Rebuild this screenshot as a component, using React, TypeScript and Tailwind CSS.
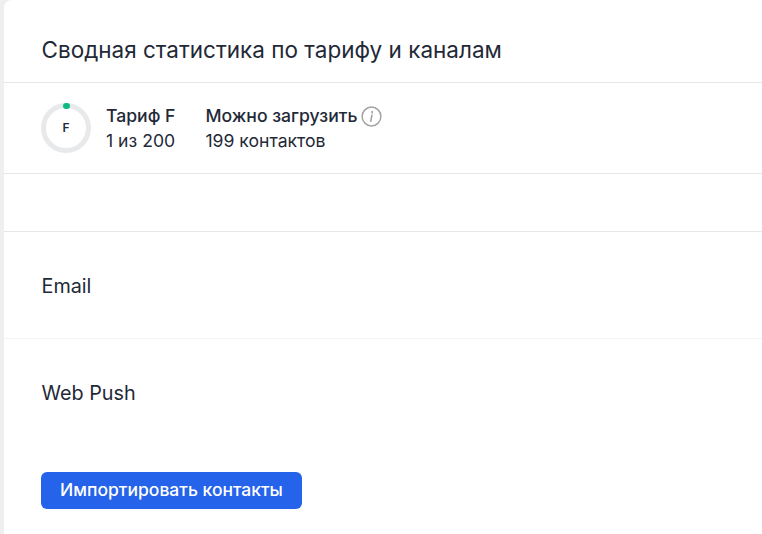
const App = () => {
  return (
    <div className="h-[534px] w-[762px] overflow-hidden bg-[#efefef] pl-[4px] font-['Inter',sans-serif] text-[#1f2937]">
      <div className="h-full rounded-tl-[8px] bg-white">
        {/* Header */}
        <div className="h-[83px] border-b border-[#e5e7eb] pt-[35px] pl-[37.5px]">
          <h1 className="text-[22.5px] leading-[30px] font-normal">Сводная статистика по тарифу и каналам</h1>
        </div>

        {/* Tariff */}
        <div className="flex h-[91px] items-center border-b border-[#e5e7eb] pl-[37px]">
          <div className="relative mr-[15px] flex h-[50px] w-[50px] items-center justify-center rounded-full border-[5px] border-[#e8e9eb] text-[12px] font-semibold">
            F
            <span className="absolute top-[-5px] left-[17px] h-[6px] w-[7px] rounded-full bg-[#10b981]"></span>
          </div>
          <div className="mr-[30px] text-[17.6px] leading-[25px]">
            <div className="font-medium">Тариф F</div>
            <div>1 из 200</div>
          </div>
          <div className="text-[17.6px] leading-[25px]">
            <div className="flex items-center gap-[4px] font-medium">
              Можно загрузить
              <svg className="mt-[2px]" width="21" height="21" viewBox="0 0 21 21" fill="none">
                <circle cx="10.5" cy="10.5" r="9.4" stroke="#a3a3a3" strokeWidth="1.5" />
                <path d="M11.2 5.6v1.5M10.9 9.2l-1.1 6" stroke="#a3a3a3" strokeWidth="1.6" strokeLinecap="round" />
              </svg>
            </div>
            <div>199 контактов</div>
          </div>
        </div>

        <div className="h-[58px] border-b border-[#e5e7eb]"></div>

        {/* Channels */}
        <div className="flex h-[107px] items-center border-b border-[#f3f4f6] pt-[4px] pl-[37.5px] text-[19.8px]">Email</div>
        <div className="flex h-[107px] items-center pt-[2px] pl-[37.5px] text-[19.8px]">Web Push</div>

        <div className="mt-[26px] pl-[37px]">
          <button className="flex h-[37px] w-[261px] items-center justify-center rounded-[6px] bg-[#2563eb] text-[17.5px] font-medium text-white">
            Импортировать контакты
          </button>
        </div>
      </div>
    </div>
  );
};

export default App;
